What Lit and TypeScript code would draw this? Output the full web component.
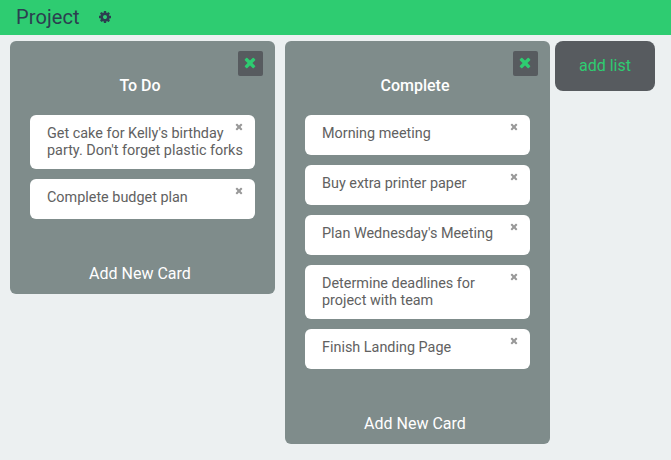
import { LitElement, html, css, svg } from "lit";
import { customElement, property } from "lit/decorators.js";

const timesPath = svg`<path fill="currentColor" d="M1490 1322q0 40-28 68l-136 136q-28 28-68 28t-68-28l-294-294-294 294q-28 28-68 28t-68-28l-136-136q-28-28-28-68t28-68l294-294-294-294q-28-28-28-68t28-68l136-136q28-28 68-28t68 28l294 294 294-294q28-28 68-28t68 28l136 136q28 28 28 68t-28 68l-294 294 294 294q28 28 28 68z"/>`;

const times = html`<svg viewBox="224 288 1344 1344" aria-hidden="true">${timesPath}</svg>`;
const timesSmall = html`<svg viewBox="176 240 1440 1440" aria-hidden="true">${timesPath}</svg>`;

const cog = html`<svg viewBox="128 128 1536 1536" aria-hidden="true">${svg`<path fill="currentColor" d="M1152 896q0-106-75-181t-181-75-181 75-75 181 75 181 181 75 181-75 75-181zm512-109v222q0 12-8 23t-20 13l-185 28q-19 54-39 91 35 50 107 138 10 12 10 25t-9 23q-27 37-99 108t-94 71q-12 0-26-9l-138-108q-44 23-91 38-16 136-29 186-7 28-36 28h-222q-14 0-24.500-8.500t-11.500-21.500l-28-184q-49-16-90-37l-141 107q-10 9-25 9-14 0-25-11-126-114-165-168-7-10-7-23 0-12 8-23 15-21 51-66.500t54-70.500q-27-50-41-99l-183-27q-13-2-21-12.500t-8-23.500v-222q0-12 8-23t19-13l186-28q14-46 39-92-40-57-107-138-10-12-10-24 0-10 9-23 26-36 98.500-107.500t94.500-71.500q13 0 26 10l138 107q44-23 91-38 16-136 29-186 7-28 36-28h222q14 0 24.500 8.500t11.500 21.500l28 184q49 16 90 37l142-107q9-9 24-9 13 0 25 10 129 119 165 170 7 8 7 22 0 12-8 23-15 21-51 66.500t-54 70.500q26 50 41 98l183 28q13 2 21 12.500t8 23.500z"/>`}</svg>`;

interface List {
  title: string;
  cards: string[];
}

const lists: List[] = [
  {
    title: "To Do",
    cards: ["Get cake for Kelly's birthday party. Don't forget plastic forks", "Complete budget plan"],
  },
  {
    title: "Complete",
    cards: [
      "Morning meeting",
      "Buy extra printer paper",
      "Plan Wednesday's Meeting",
      "Determine deadlines for project with team",
      "Finish Landing Page",
    ],
  },
];

@customElement("task-card")
export class TaskCard extends LitElement {
  @property() text = "";

  static styles = css`
    :host {
      display: block;
      position: relative;
      box-sizing: border-box;
      min-height: 40px;
      padding: 10px 10px 10px 17px;
      border-radius: 6px;
      background: #fff;
      color: #616161;
      font-size: 14.4px;
      line-height: 17px;
    }
    .remove {
      position: absolute;
      top: 8px;
      right: 12px;
      width: 8px;
      height: 8px;
      padding: 0;
      border: 0;
      background: none;
      color: #999;
    }
    .remove svg {
      display: block;
      width: 8px;
      height: 8px;
    }
  `;

  render() {
    return html`${this.text}<button class="remove" aria-label="Delete card">${timesSmall}</button>`;
  }
}

@customElement("task-list")
export class TaskList extends LitElement {
  @property({ attribute: false }) list!: List;

  static styles = css`
    :host {
      display: flex;
      flex-direction: column;
      box-sizing: border-box;
      width: 265px;
      padding: 10px 20px;
      border-radius: 6px;
      background: #7f8c8b;
      color: #fff;
    }
    .remove {
      display: flex;
      align-items: center;
      justify-content: center;
      align-self: flex-end;
      box-sizing: border-box;
      width: 25px;
      height: 25px;
      margin-right: -8px;
      padding: 0 1px 1px 0;
      border: 0;
      border-radius: 2px;
      background: #575b5f;
      color: #2ecc71;
    }
    .remove svg {
      width: 12px;
      height: 12px;
    }
    .title {
      margin: 0 5px 20px 0;
      font-size: 16px;
      font-weight: 500;
      line-height: 19px;
      text-align: center;
    }
    .cards {
      display: flex;
      flex-direction: column;
      gap: 10px;
    }
    .add {
      margin: 45px 5px 0 0;
      font-size: 16px;
      line-height: 20px;
      text-align: center;
    }
  `;

  render() {
    return html`
      <button class="remove" aria-label="Delete list">${times}</button>
      <h2 class="title">${this.list.title}</h2>
      <div class="cards">${this.list.cards.map((c) => html`<task-card .text=${c}></task-card>`)}</div>
      <div class="add">Add New Card</div>
    `;
  }
}

@customElement("app-root")
export class AppRoot extends LitElement {
  static styles = css`
    :host {
      display: block;
      min-height: 460px;
      background: #ecf0f1;
      font-family: Roboto, sans-serif;
    }
    .bar {
      display: flex;
      align-items: center;
      gap: 19px;
      box-sizing: border-box;
      height: 35px;
      padding: 0 16px 1px;
      background: #2ecc71;
      color: #2c3e50;
    }
    .name {
      margin: 0;
      font-size: 20px;
      font-weight: 400;
      line-height: 35px;
      letter-spacing: 0.1px;
    }
    .bar svg {
      width: 12px;
      height: 12px;
    }
    .board {
      display: flex;
      align-items: flex-start;
      gap: 10px;
      padding: 6px 10px;
    }
    .add-list {
      width: 100px;
      height: 50px;
      margin-left: -5px;
      padding: 0 0 1px;
      border: 0;
      border-radius: 8px;
      background: #575b5f;
      color: #2ecc71;
      font-family: inherit;
      font-size: 16px;
    }
  `;

  render() {
    return html`
      <header class="bar"><h1 class="name">Project</h1>${cog}</header>
      <main class="board">
        ${lists.map((l) => html`<task-list .list=${l}></task-list>`)}
        <button class="add-list">add list</button>
      </main>
    `;
  }
}
